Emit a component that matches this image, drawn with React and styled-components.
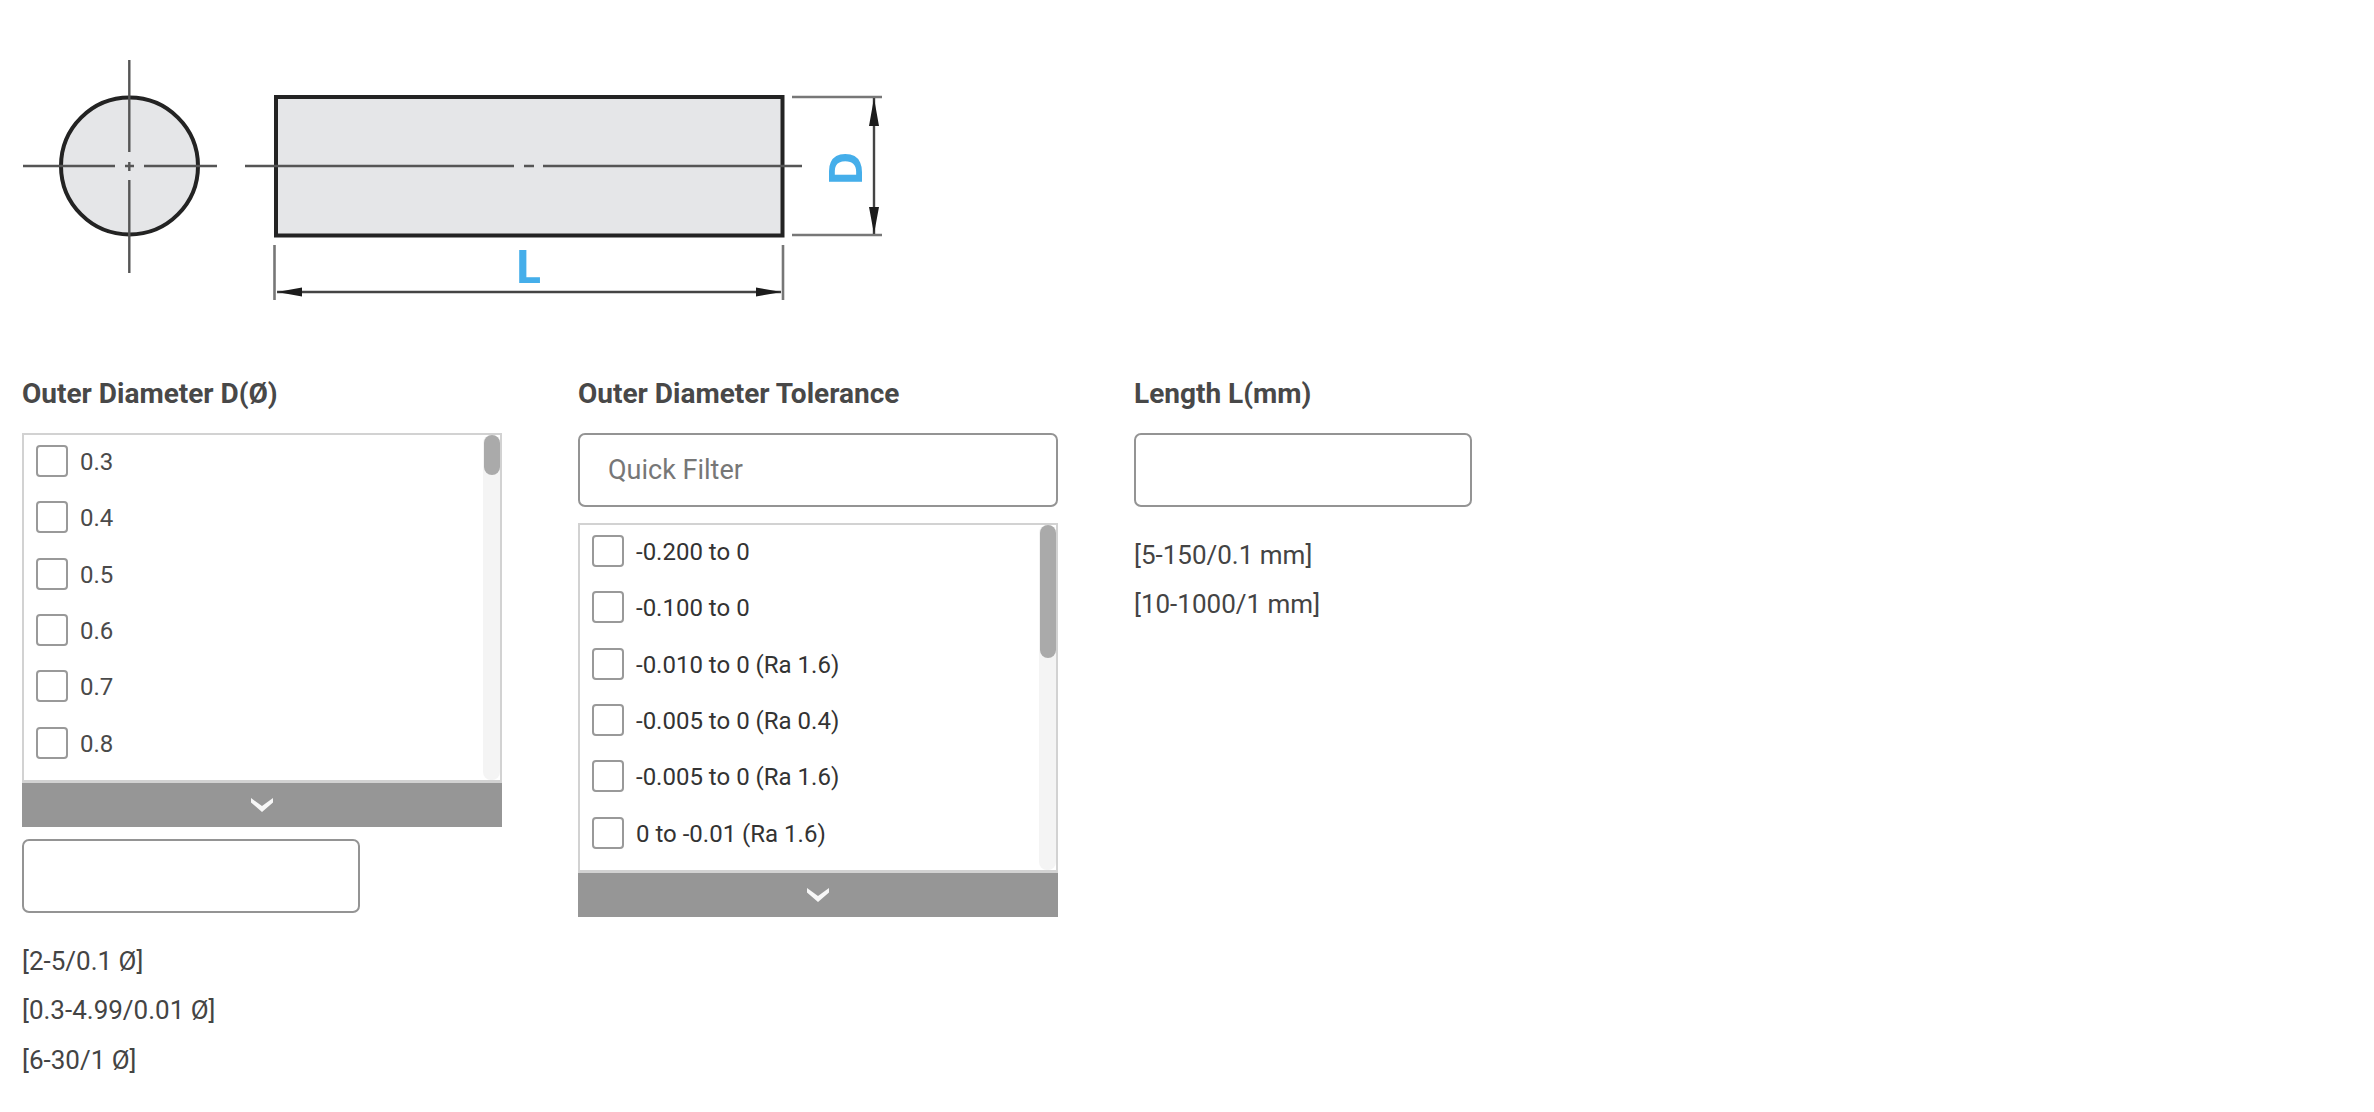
import React from "react";
import styled, { createGlobalStyle } from "styled-components";

const Global = createGlobalStyle`
  html, body { margin: 0; padding: 0; background: #fff; }
  body { font-family: Roboto, "Liberation Sans", sans-serif; }
  * { box-sizing: border-box; }
`;

const Page = styled.div`
  width: 2374px;
  min-height: 1112px;
  padding: 60px 22px 0;
`;
const DiagramSvg = styled.svg`
  display: block;
  width: 880px;
  height: 243px;
  margin-bottom: 70px;
  filter: blur(0.45px);
`;
const Filters = styled.div`
  display: flex;
  align-items: flex-start;
  gap: 76px;
`;
const Column = styled.section`
  width: ${(p) => p.$width}px;
  flex: none;
`;
const Title = styled.h3`
  margin: 0 0 20px;
  height: 40px;
  font-size: 28px;
  line-height: 42px;
  font-weight: 700;
  color: #484848;
  white-space: nowrap;
`;
const TextBox = styled.input`
  display: block;
  width: ${(p) => p.$width || 338}px;
  height: 74px;
  padding: 0 28px;
  border: 2px solid #949494;
  border-radius: 7px;
  background: #fff;
  font-family: inherit;
  font-size: 27px;
  color: #333;
  outline: none;
  &::placeholder { color: #777; opacity: 1; }
`;
const FilterBox = styled(TextBox)`
  width: 100%;
  margin-bottom: 16px;
`;
const ListFrame = styled.div`
  position: relative;
  height: 350px;
  border: 2px solid #d2d2d2;
  border-bottom-width: 3px;
  overflow: hidden;
  background: #fff;
`;
const OptionList = styled.ul`
  list-style: none;
  margin: 0;
  padding: 10px 0 0 12px;
  display: flex;
  flex-direction: column;
  gap: 24.33px;
`;
const Option = styled.li`
  display: flex;
  align-items: center;
  gap: 12px;
  height: 32px;
  font-size: 24px;
  color: ${(p) => p.$color};
  white-space: nowrap;
`;
const OptionText = styled.span`
  padding-top: 2px;
`;
const Check = styled.input.attrs({ type: "checkbox" })`
  appearance: none;
  flex: none;
  width: 32px;
  height: 32px;
  margin: 0;
  border: 2px solid #999;
  border-radius: 4px;
  background: #fff;
`;
const ScrollTrack = styled.div`
  position: absolute;
  top: 0;
  right: 0;
  bottom: 0;
  width: 17px;
  background: #f4f4f4;
  border-radius: 8px;
`;
const ScrollThumb = styled.div`
  width: 16px;
  height: ${(p) => p.$height}px;
  margin-left: 1px;
  border-radius: 8px;
  background: #aaa;
`;
const MoreButton = styled.button`
  display: flex;
  align-items: center;
  justify-content: center;
  width: 100%;
  height: 44px;
  padding: 0;
  border: 0;
  background: #969696;
`;
const Hints = styled.div`
  margin-top: ${(p) => p.$top}px;
`;
const Hint = styled.div`
  font-size: 26px;
  line-height: 49.4px;
  color: #444;
  white-space: nowrap;
`;
const SpacedBox = styled.div`
  margin-top: 12px;
`;
const Chevron = styled.svg`
  display: block;
  width: 24px;
  height: 16px;
  margin-bottom: 1px;
`;

const ChevronIcon = () => (
  <Chevron viewBox="0 0 24 16" aria-hidden="true">
    <polygon points="1,1 12,9 23,1 23,5.5 12,15 1,5.5" fill="#fff" opacity="0.92" />
  </Chevron>
);

const Diagram = () => {
  const thin = { stroke: "#555", strokeWidth: 2.4, fill: "none" };
  const thick = { stroke: "#232323", strokeWidth: 4, fill: "#e5e6e8" };
  const dim = { stroke: "#444", strokeWidth: 2.4, fill: "none" };
  const ext = { stroke: "#777", strokeWidth: 2.6, fill: "none" };
  return (
    <DiagramSvg viewBox="22 60 880 243" aria-label="Round bar dimensions">
      <circle cx="129.5" cy="166" r="68.5" {...thick} />
      <path d="M129.3 59V152M129.3 180V273M23 166H115M144 166H217M125 166H134M129.3 162V171" {...thin} />
      <rect x="276" y="97" width="506.5" height="138.5" {...thick} />
      <path d="M245 166H514M524 166H534M543 166H802" {...thin} />
      <path d="M274.5 245V300M783 245V300" {...ext} />
      <path d="M792 97H882M792 235H882" {...ext} />
      <path d="M277 292H781M874 98V234" {...dim} />
      <path d="M277 292L302 287.5V296.5ZM781.7 292L756 287.5V296.5ZM874 98L869 126H879ZM874 234L869 207H879Z" fill="#1c1c1c" />
      <text x="515" y="283" fontFamily="'Open Sans', sans-serif" fontWeight="700" fontSize="47" fill="#45aeea">L</text>
      <text transform="translate(862 186) rotate(-90)" fontFamily="'Open Sans', sans-serif" fontWeight="700" fontSize="47" fill="#45aeea">D</text>
    </DiagramSvg>
  );
};

const OptionPanel = ({ options, color, thumb }) => (
  <div>
    <ListFrame>
      <OptionList>
        {options.map((o) => (
          <Option key={o} $color={color}>
            <Check aria-label={o} />
            <OptionText>{o}</OptionText>
          </Option>
        ))}
      </OptionList>
      <ScrollTrack>
        <ScrollThumb $height={thumb} />
      </ScrollTrack>
    </ListFrame>
    <MoreButton type="button" aria-label="Show more">
      <ChevronIcon />
    </MoreButton>
  </div>
);

const diameters = ["0.3", "0.4", "0.5", "0.6", "0.7", "0.8"];
const tolerances = [
  "-0.200 to 0",
  "-0.100 to 0",
  "-0.010 to 0 (Ra 1.6)",
  "-0.005 to 0 (Ra 0.4)",
  "-0.005 to 0 (Ra 1.6)",
  "0 to -0.01 (Ra 1.6)",
];

export default function App() {
  return (
    <Page>
      <Global />
      <Diagram />
      <Filters>
        <Column $width={480}>
          <Title>Outer Diameter D(Ø)</Title>
          <OptionPanel options={diameters} color="#4a4a4a" thumb={40} />
          <SpacedBox>
            <TextBox aria-label="Outer Diameter value" />
          </SpacedBox>
          <Hints $top={24}>
            <Hint>[2-5/0.1 Ø]</Hint>
            <Hint>[0.3-4.99/0.01 Ø]</Hint>
            <Hint>[6-30/1 Ø]</Hint>
          </Hints>
        </Column>
        <Column $width={480}>
          <Title>Outer Diameter Tolerance</Title>
          <FilterBox placeholder="Quick Filter" />
          <OptionPanel options={tolerances} color="#333" thumb={133} />
        </Column>
        <Column $width={338}>
          <Title>Length L(mm)</Title>
          <TextBox aria-label="Length value" />
          <Hints $top={24}>
            <Hint>[5-150/0.1 mm]</Hint>
            <Hint>[10-1000/1 mm]</Hint>
          </Hints>
        </Column>
      </Filters>
    </Page>
  );
}
